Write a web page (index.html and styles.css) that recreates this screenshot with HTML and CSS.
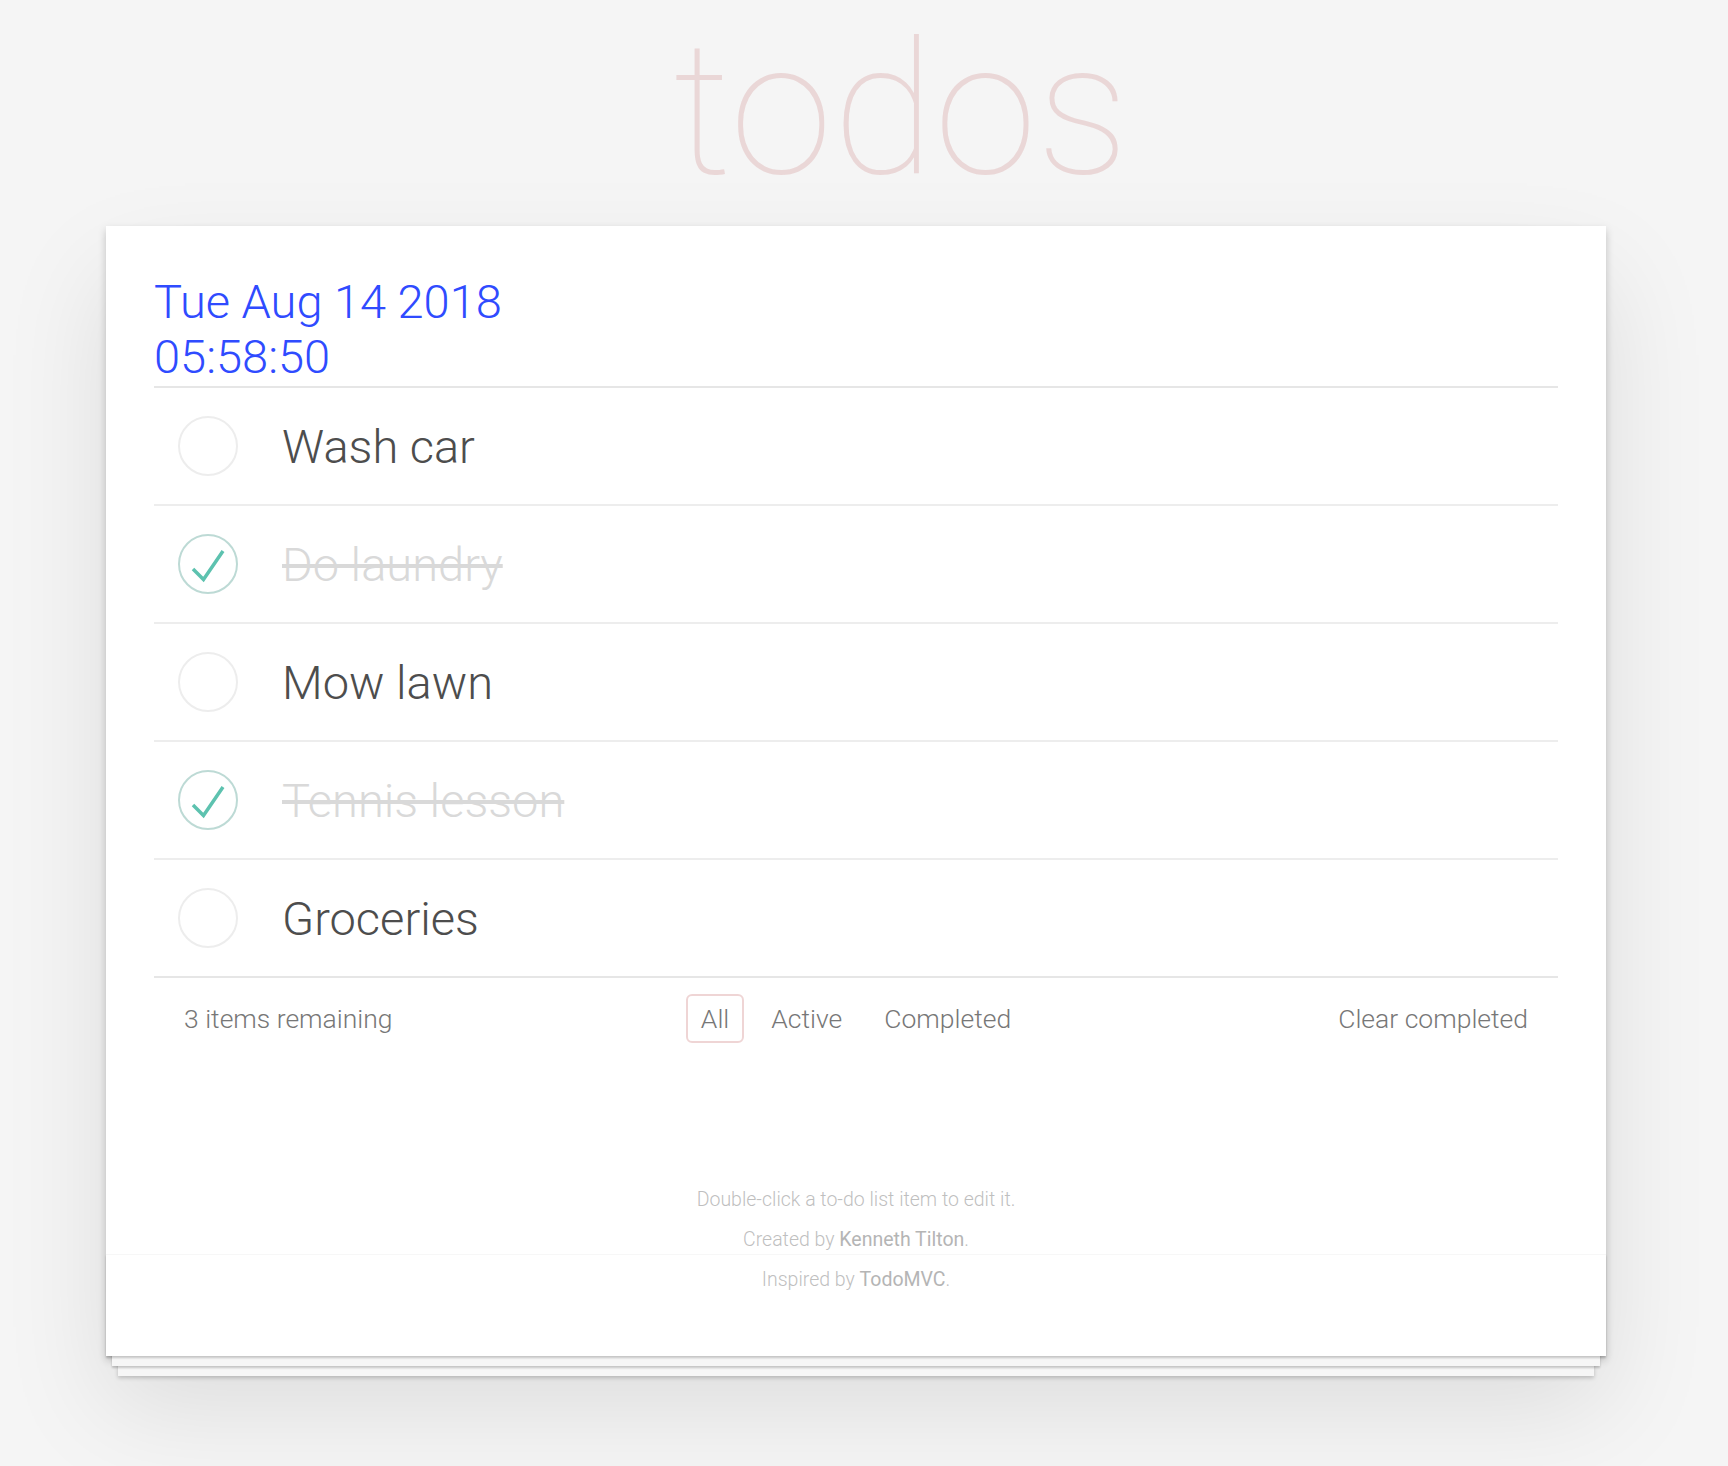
FILE: index.html
```html
<!DOCTYPE html>
<html lang="en">
<head>
<meta charset="utf-8">
<title>todos</title>
<link rel="stylesheet" href="styles.css">
</head>
<body>
<div class="page">
  <h1 class="title">todos</h1>
  <section class="todoapp">
    <header class="clock">
      <div class="clock-line">Tue Aug 14 2018</div>
      <div class="clock-line">05:58:50</div>
    </header>
    <ul class="todo-list">
      <li class="todo">
        <svg class="toggle" viewBox="0 0 60 60" width="60" height="60"><circle cx="30" cy="30" r="29" fill="none" stroke="#ededed" stroke-width="2"/></svg>
        <label class="todo-label">Wash car</label>
      </li>
      <li class="todo completed">
        <svg class="toggle" viewBox="0 0 60 60" width="60" height="60"><circle cx="30" cy="30" r="29" fill="none" stroke="#bddad5" stroke-width="2"/><path d="M15 35 L25.5 45.5 L45 17" fill="none" stroke="#5dc2af" stroke-width="3.5"/></svg>
        <label class="todo-label">Do laundry</label>
      </li>
      <li class="todo">
        <svg class="toggle" viewBox="0 0 60 60" width="60" height="60"><circle cx="30" cy="30" r="29" fill="none" stroke="#ededed" stroke-width="2"/></svg>
        <label class="todo-label">Mow lawn</label>
      </li>
      <li class="todo completed">
        <svg class="toggle" viewBox="0 0 60 60" width="60" height="60"><circle cx="30" cy="30" r="29" fill="none" stroke="#bddad5" stroke-width="2"/><path d="M15 35 L25.5 45.5 L45 17" fill="none" stroke="#5dc2af" stroke-width="3.5"/></svg>
        <label class="todo-label">Tennis lesson</label>
      </li>
      <li class="todo">
        <svg class="toggle" viewBox="0 0 60 60" width="60" height="60"><circle cx="30" cy="30" r="29" fill="none" stroke="#ededed" stroke-width="2"/></svg>
        <label class="todo-label">Groceries</label>
      </li>
    </ul>
    <footer class="footer">
      <span class="todo-count">3 items remaining</span>
      <ul class="filters">
        <li><a class="filter selected" href="#/">All</a></li>
        <li><a class="filter" href="#/active">Active</a></li>
        <li><a class="filter" href="#/completed">Completed</a></li>
      </ul>
      <button class="clear-completed" type="button">Clear completed</button>
    </footer>
    <div class="info">
      <p>Double-click a to-do list item to edit it.</p>
      <p>Created by <a href="#">Kenneth Tilton</a>.</p>
      <p>Inspired by <a href="#">TodoMVC</a>.</p>
    </div>
  </section>
</div>
</body>
</html>
```
FILE: styles.css
```css
* {
  box-sizing: border-box;
}

html,
body {
  margin: 0;
  padding: 0;
}

body {
  min-height: 1466px;
  background: #f5f5f5;
  color: #4d4d4d;
  font-family: Roboto, "Helvetica Neue", "Liberation Sans", Arial, sans-serif;
  font-weight: 300;
  -webkit-font-smoothing: antialiased;
}

.page {
  padding: 0 0 0 106px;
}

.title {
  margin: 0 0 8px;
  padding-left: 567px;
  font-size: 186px;
  line-height: 218px;
  font-weight: 100;
  color: rgba(175, 47, 47, 0.15);
}

.todoapp {
  position: relative;
  width: 1500px;
  padding: 48px 48px 66px;
  background: #fff;
  box-shadow: 0 4px 8px 0 rgba(0, 0, 0, 0.2), 0 50px 100px 0 rgba(0, 0, 0, 0.1);
}

.todoapp::after {
  content: "";
  position: absolute;
  left: 0;
  right: 0;
  bottom: 0;
  height: 101px;
  border-top: 1px solid #f7f7f7;
  pointer-events: none;
  box-shadow:
    0 2px 2px rgba(0, 0, 0, 0.2),
    0 16px 0 -6px #f6f6f6,
    0 18px 2px -6px rgba(0, 0, 0, 0.2),
    0 32px 0 -12px #f6f6f6,
    0 34px 4px -12px rgba(0, 0, 0, 0.2);
}

.clock {
  padding-bottom: 2px;
  border-bottom: 2px solid #e6e6e6;
  color: #2f4bff;
  font-size: 47px;
  line-height: 55px;
}

.todo-list {
  margin: 0;
  padding: 0;
  list-style: none;
}

.todo {
  display: flex;
  align-items: center;
  height: 118px;
  padding-left: 24px;
  border-bottom: 2px solid #ededed;
}

.todo:last-child {
  height: 116px;
  border-bottom: none;
}

.toggle {
  flex: none;
  display: block;
}

.todo-label {
  padding-left: 44px;
  padding-top: 3px;
  font-size: 47px;
  line-height: 1.2;
  color: #4d4d4d;
}

.completed .todo-label {
  color: #d9d9d9;
  text-decoration: line-through;
  text-decoration-color: #d9d9d9;
  text-decoration-thickness: 4px;
}

.footer {
  display: grid;
  grid-template-columns: 1fr auto 1fr;
  align-items: center;
  height: 82px;
  padding: 0 30px;
  border-top: 2px solid #e6e6e6;
  color: #777;
  font-size: 26.5px;
}

.todo-count {
  justify-self: start;
}

.filters {
  display: flex;
  margin: 0;
  padding: 0;
  list-style: none;
}

.filter {
  display: block;
  margin: 0 6px;
  padding: 6px 13px;
  border: 2px solid transparent;
  border-radius: 6px;
  color: inherit;
  line-height: 33px;
  text-decoration: none;
}

.filter.selected {
  border-color: rgba(175, 47, 47, 0.2);
}

.clear-completed {
  justify-self: end;
  margin: 0;
  padding: 0;
  border: 0;
  background: none;
  color: inherit;
  font: inherit;
  cursor: pointer;
}

.info {
  padding-top: 132px;
  color: #bfbfbf;
  font-size: 19.5px;
  line-height: 20px;
  text-align: center;
  text-shadow: 0 1px 0 rgba(255, 255, 255, 0.5);
}

.info p {
  margin: 0;
}

.info p + p {
  margin-top: 20px;
}

.info a {
  color: #b5b5b5;
  font-weight: 400;
  text-decoration: none;
}
```
